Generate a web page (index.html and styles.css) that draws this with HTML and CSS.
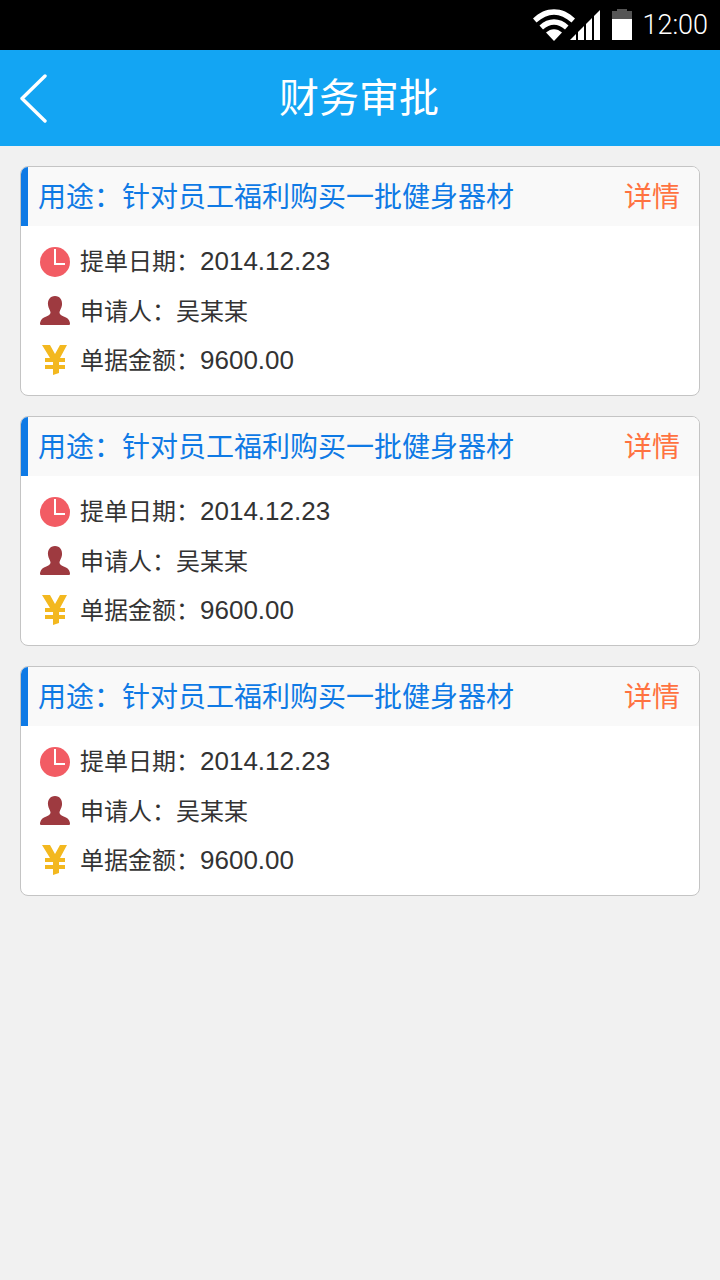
FILE: index.html
```html
<!DOCTYPE html>
<html lang="zh-CN">
<head>
  <meta charset="UTF-8">
  <title>财务审批</title>
  <link rel="stylesheet" href="styles.css">
</head>
<body>
<!-- Status bar -->
<div class="status-bar">
  <svg class="icon-wifi" width="42" height="32" viewBox="0 0 42 32">
    <path d="M0 9.5 C12 -3 30 -3 42 9.5 L38.5 13.5 C27 3 15 3 3.5 13.5 Z" fill="#fff"/>
    <path d="M6.5 16.5 C15 8 27 8 35.5 16.5 L32 20.5 C25 14 17 14 10 20.5 Z" fill="#fff"/>
    <path d="M13 23.5 C18 19 24 19 29 23.5 L21 32 Z" fill="#fff"/>
  </svg>
  <svg class="icon-signal" width="31" height="32" viewBox="0 0 31 32">
    <path d="M0 31 L6 25 V31 Z" fill="#fff"/>
    <path d="M8 23 L14 17 V31 H8 Z" fill="#fff"/>
    <path d="M16 15 L22 9 V31 H16 Z" fill="#fff"/>
    <path d="M24 7 L30 1 V31 H24 Z" fill="#fff"/>
  </svg>
  <svg class="icon-battery" width="20" height="32" viewBox="0 0 20 32">
    <path d="M5 0 H15 V2 H20 V10 H0 V2 H5 Z" fill="#555"/>
    <rect x="0" y="10" width="20" height="21" fill="#fff"/>
  </svg>
  <span class="time">12:00</span>
</div>

<!-- Title bar -->
<header class="app-bar">
  <svg class="back" width="30" height="50" viewBox="0 0 30 50">
    <path d="M26 2 L3 24.5 L26 47" fill="none" stroke="#fff" stroke-width="3.4" stroke-linecap="round" stroke-linejoin="round"/>
  </svg>
  <h1>财务审批</h1>
</header>

<!-- Approval list -->
<main class="list">
  <section class="card">
    <div class="card-head">
      <span class="purpose">用途：针对员工福利购买一批健身器材</span>
      <a class="detail">详情</a>
    </div>
    <div class="card-body">
      <div class="row">
        <svg class="row-icon" width="32" height="32" viewBox="0 0 32 32"><circle cx="16" cy="16" r="15" fill="#f25c64"/><path d="M16 3 V18 H26" fill="none" stroke="#fff" stroke-width="2"/></svg>
        <span class="row-text">提单日期：<span class="num">2014.12.23</span></span>
      </div>
      <div class="row">
        <svg class="row-icon" width="32" height="32" viewBox="0 0 32 32"><path d="M16 1 C21 1 23.500 5 23 10 C22.700 13 20.500 15.500 20.500 17.500 C20.500 20 24 21 27 22.500 C30 24 31 27 31 28.500 C31 29.500 30.500 30 29.500 30 H2.500 C1.500 30 1 29.500 1 28.500 C1 27 2 24 5 22.500 C8 21 11.500 20 11.500 17.500 C11.500 15.500 9.300 13 9 10 C8.500 5 11 1 16 1 Z" fill="#9e3a40"/></svg>
        <span class="row-text">申请人：吴某某</span>
      </div>
      <div class="row">
        <svg class="row-icon" width="32" height="32" viewBox="0 0 32 32"><path d="M3 0 H11 L16 9 L21 0 H28 L21 13 H26 V17 H20 V20 H26 V24 H20 V28 L14 30 V24 H6 V20 H14 V17 H6 V13 H11 Z" fill="#f3b81f"/></svg>
        <span class="row-text">单据金额：<span class="num">9600.00</span></span>
      </div>
    </div>
  </section>

  <section class="card">
    <div class="card-head">
      <span class="purpose">用途：针对员工福利购买一批健身器材</span>
      <a class="detail">详情</a>
    </div>
    <div class="card-body">
      <div class="row">
        <svg class="row-icon" width="32" height="32" viewBox="0 0 32 32"><circle cx="16" cy="16" r="15" fill="#f25c64"/><path d="M16 3 V18 H26" fill="none" stroke="#fff" stroke-width="2"/></svg>
        <span class="row-text">提单日期：<span class="num">2014.12.23</span></span>
      </div>
      <div class="row">
        <svg class="row-icon" width="32" height="32" viewBox="0 0 32 32"><path d="M16 1 C21 1 23.500 5 23 10 C22.700 13 20.500 15.500 20.500 17.500 C20.500 20 24 21 27 22.500 C30 24 31 27 31 28.500 C31 29.500 30.500 30 29.500 30 H2.500 C1.500 30 1 29.500 1 28.500 C1 27 2 24 5 22.500 C8 21 11.500 20 11.500 17.500 C11.500 15.500 9.300 13 9 10 C8.500 5 11 1 16 1 Z" fill="#9e3a40"/></svg>
        <span class="row-text">申请人：吴某某</span>
      </div>
      <div class="row">
        <svg class="row-icon" width="32" height="32" viewBox="0 0 32 32"><path d="M3 0 H11 L16 9 L21 0 H28 L21 13 H26 V17 H20 V20 H26 V24 H20 V28 L14 30 V24 H6 V20 H14 V17 H6 V13 H11 Z" fill="#f3b81f"/></svg>
        <span class="row-text">单据金额：<span class="num">9600.00</span></span>
      </div>
    </div>
  </section>

  <section class="card">
    <div class="card-head">
      <span class="purpose">用途：针对员工福利购买一批健身器材</span>
      <a class="detail">详情</a>
    </div>
    <div class="card-body">
      <div class="row">
        <svg class="row-icon" width="32" height="32" viewBox="0 0 32 32"><circle cx="16" cy="16" r="15" fill="#f25c64"/><path d="M16 3 V18 H26" fill="none" stroke="#fff" stroke-width="2"/></svg>
        <span class="row-text">提单日期：<span class="num">2014.12.23</span></span>
      </div>
      <div class="row">
        <svg class="row-icon" width="32" height="32" viewBox="0 0 32 32"><path d="M16 1 C21 1 23.500 5 23 10 C22.700 13 20.500 15.500 20.500 17.500 C20.500 20 24 21 27 22.500 C30 24 31 27 31 28.500 C31 29.500 30.500 30 29.500 30 H2.500 C1.500 30 1 29.500 1 28.500 C1 27 2 24 5 22.500 C8 21 11.500 20 11.500 17.500 C11.500 15.500 9.300 13 9 10 C8.500 5 11 1 16 1 Z" fill="#9e3a40"/></svg>
        <span class="row-text">申请人：吴某某</span>
      </div>
      <div class="row">
        <svg class="row-icon" width="32" height="32" viewBox="0 0 32 32"><path d="M3 0 H11 L16 9 L21 0 H28 L21 13 H26 V17 H20 V20 H26 V24 H20 V28 L14 30 V24 H6 V20 H14 V17 H6 V13 H11 Z" fill="#f3b81f"/></svg>
        <span class="row-text">单据金额：<span class="num">9600.00</span></span>
      </div>
    </div>
  </section>
</main>
</body>
</html>
```

FILE: styles.css
```css
/* Basic reset and body styling */
body {
  margin: 0;
  padding: 0;
  min-height: 1280px;
  font-family: "Liberation Sans", "Noto Sans CJK SC", sans-serif;
  background-color: #f1f1f1;
  color: #333;
}

/* Status bar */
.status-bar {
  height: 50px;
  background-color: #000;
  color: #fff;
  display: flex;
  align-items: center;
  justify-content: flex-end;
  padding-right: 12px;
}
.icon-wifi {
  margin-right: -5px;
}
.icon-signal {
  margin-right: 11px;
}
.icon-battery {
  margin-right: 10px;
}
.time {
  font-family: Roboto, sans-serif;
  font-size: 27px;
  font-weight: 300;
  line-height: 50px;
}

/* Title bar */
.app-bar {
  position: relative;
  height: 96px;
  background-color: #13a5f3;
  display: flex;
  align-items: center;
  justify-content: center;
  padding-bottom: 6px;
  box-sizing: border-box;
}
.app-bar h1 {
  margin: 0 2px 0 0;
  font-size: 40px;
  font-weight: 400;
  color: #fff;
}
.back {
  position: absolute;
  left: 19px;
  top: 24px;
}

/* List and cards */
.list {
  padding: 20px;
  display: flex;
  flex-direction: column;
  gap: 20px;
}
.card {
  height: 230px;
  box-sizing: border-box;
  background-color: #fff;
  border: 1px solid #c4c4c4;
  border-radius: 8px;
  overflow: hidden;
}
.card-head {
  height: 59px;
  box-sizing: border-box;
  background-color: #f9f9f9;
  border-left: 7px solid #0f7ae5;
  padding: 0 19px 4px 10px;
  display: flex;
  align-items: center;
  justify-content: space-between;
  font-size: 28px;
}
.purpose {
  color: #0f7ae5;
}
.detail {
  color: #ff7240;
}
.card-body {
  padding: 11px 0 0 18px;
}
.row {
  height: 49.5px;
  display: flex;
  align-items: center;
  font-size: 24px;
  color: #333;
}
.row-icon {
  margin-right: 9px;
  flex-shrink: 0;
}
.row-text {
  padding-bottom: 4px;
}
.num {
  font-size: 26px;
}
```
